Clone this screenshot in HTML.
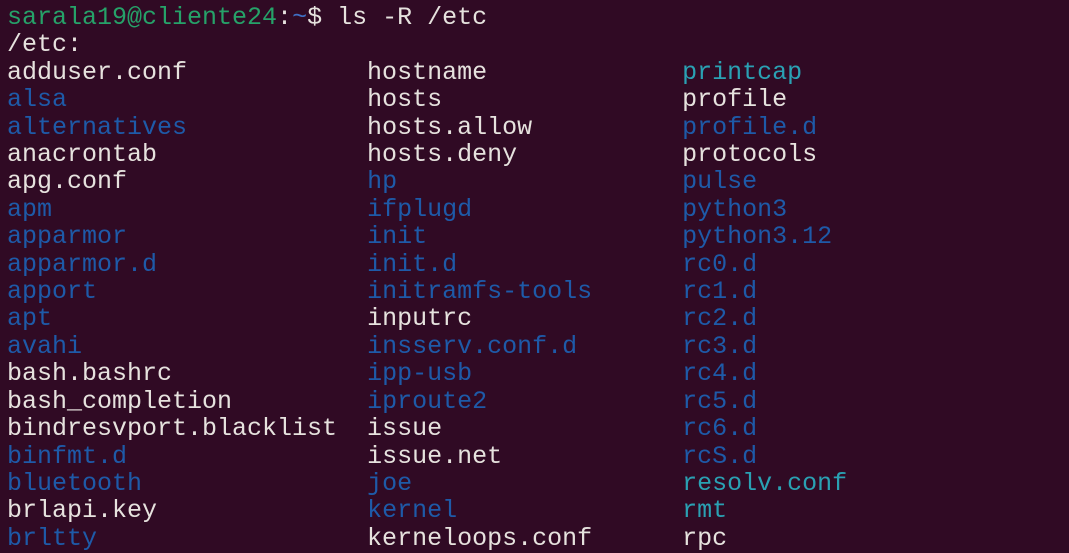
<!DOCTYPE html>
<html><head><meta charset="utf-8"><style>
html,body{margin:0;padding:0;background:#300a24;width:1069px;height:550px;overflow:hidden}
pre{margin:0;position:absolute;left:7px;top:4px;font-family:"Liberation Mono","DejaVu Sans Mono",monospace;font-size:25px;line-height:27.4px;color:#e6e2de;letter-spacing:0}
.g{color:#26a269}.p{color:#3f6fc4}
.b{color:#1e5aa8}.t{color:#2aa1b3}
</style></head><body><pre><span class="g">sarala19@cliente24</span>:<span class="p">~</span>$ ls -R /etc
/etc:
adduser.conf            hostname             <span class="t">printcap</span>
<span class="b">alsa</span>                    hosts                profile
<span class="b">alternatives</span>            hosts.allow          <span class="b">profile.d</span>
anacrontab              hosts.deny           protocols
apg.conf                <span class="b">hp</span>                   <span class="b">pulse</span>
<span class="b">apm</span>                     <span class="b">ifplugd</span>              <span class="b">python3</span>
<span class="b">apparmor</span>                <span class="b">init</span>                 <span class="b">python3.12</span>
<span class="b">apparmor.d</span>              <span class="b">init.d</span>               <span class="b">rc0.d</span>
<span class="b">apport</span>                  <span class="b">initramfs-tools</span>      <span class="b">rc1.d</span>
<span class="b">apt</span>                     inputrc              <span class="b">rc2.d</span>
<span class="b">avahi</span>                   <span class="b">insserv.conf.d</span>       <span class="b">rc3.d</span>
bash.bashrc             <span class="b">ipp-usb</span>              <span class="b">rc4.d</span>
bash_completion         <span class="b">iproute2</span>             <span class="b">rc5.d</span>
bindresvport.blacklist  issue                <span class="b">rc6.d</span>
<span class="b">binfmt.d</span>                issue.net            <span class="b">rcS.d</span>
<span class="b">bluetooth</span>               <span class="b">joe</span>                  <span class="t">resolv.conf</span>
brlapi.key              <span class="b">kernel</span>               <span class="t">rmt</span>
<span class="b">brltty</span>                  kerneloops.conf      rpc</pre></body></html>
